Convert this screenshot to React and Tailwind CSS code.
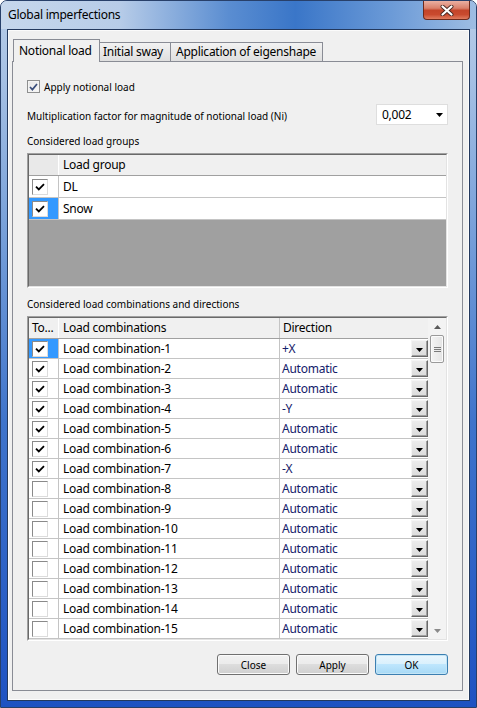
import React from 'react';

const GROUPS = [
  { name: 'DL', on: true, sel: false },
  { name: 'Snow', on: true, sel: true },
];

const DIRS = ['+X', 'Automatic', 'Automatic', '-Y', 'Automatic', 'Automatic', '-X'];
const COMBOS = Array.from({ length: 15 }, (_, i) => ({
  name: `Load combination-${i + 1}`,
  dir: DIRS[i] || 'Automatic',
  on: i < 7,
  sel: i === 0,
}));

function GridCheck({ checked }) {
  return (
    <div className="w-[16px] h-[16px] shrink-0 bg-white border border-t-[#8a8a8a] border-l-[#8a8a8a] border-r-[#dcdcdc] border-b-[#dcdcdc] flex items-center justify-center">
      {checked && (
        <svg width="10" height="8" viewBox="0 0 10 8">
          <path d="M1 3.6 L3.8 6.4 L9 1.2" fill="none" stroke="#000" strokeWidth="1.8" />
        </svg>
      )}
    </div>
  );
}

function DropBtn() {
  return (
    <div className="w-[17px] h-[17px] shrink-0 border border-t-[#f4f4f4] border-l-[#f4f4f4] border-r-[#696969] border-b-[#696969] bg-[linear-gradient(180deg,#ececec,#dcdcdc)] shadow-[inset_-1px_-1px_0_#a0a0a0] flex items-center justify-center">
      <svg width="7" height="4" viewBox="0 0 7 4" className="mt-[2px]">
        <path d="M0 0 H7 L3.5 4 Z" fill="#000" />
      </svg>
    </div>
  );
}

function Button({ children, primary }) {
  return (
    <button
      className={`w-[73px] h-[21px] rounded-[3px] border text-[10px] tracking-normal leading-[16px] text-black ${
        primary
          ? 'border-[#3c7fb1] bg-[linear-gradient(180deg,#eaf6fd_0%,#d9f0fc_50%,#bee6fd_50%,#a7d9f5_100%)] shadow-[inset_0_0_0_1px_#c4e5f6]'
          : 'border-[#707070] bg-[linear-gradient(180deg,#f2f2f2_0%,#ebebeb_50%,#dddddd_50%,#cfcfcf_100%)] shadow-[inset_0_0_0_1px_#fbfbfb]'
      }`}
    >
      {children}
    </button>
  );
}

export default function App() {
  return (
    <div className="w-[477px] h-[708px] flex flex-col overflow-hidden rounded-t-[7px] border border-[#28406a] bg-[linear-gradient(180deg,#b8cde8_0px,#a5c0e4_80px,#7aa2da_220px,#3f74cb_420px,#1e52c2_708px)] font-['Noto_Sans','Open_Sans',sans-serif] text-[12px] leading-[16px] text-black tracking-[-0.25px]">
      {/* title bar */}
      <div className="h-[28px] shrink-0 flex items-start bg-[linear-gradient(90deg,#c6d7ec_0%,#b7cce8_25%,#5a8dd1_48%,#3a76c8_62%,#6b9ad7_82%,#9ebde3_100%)]">
        <span className="ml-[7px] mt-[6px]">Global imperfections</span>
        <div className="ml-auto mr-[6px] w-[47px] h-[19px] rounded-b-[4px] border border-t-0 border-[#6d2a1c] bg-[linear-gradient(180deg,#eab0a2_0%,#d9806b_40%,#c4452a_52%,#c94a2e_75%,#e07c5f_100%)] flex items-center justify-center">
          <svg width="14" height="11" viewBox="0 0 14 11">
            <path d="M2.5 1.5 L11.5 9.5 M11.5 1.5 L2.5 9.5" stroke="#4a2a24" strokeWidth="4" strokeLinecap="round" />
            <path d="M2.5 1.5 L11.5 9.5 M11.5 1.5 L2.5 9.5" stroke="#ffffff" strokeWidth="2.2" strokeLinecap="round" />
          </svg>
        </div>
      </div>

      {/* client area */}
      <div className="flex-1 mx-[6px] mb-[6px] border border-[#23395e] bg-[#f0f0f0] shadow-[inset_0_0_0_1px_#fbfbfb] flex flex-col">
        {/* tabs */}
        <div className="h-[31px] shrink-0 flex items-end pl-[5px]">
          <div className="relative z-10 -mb-px w-[87px] h-[23px] border border-b-0 border-[#898c95] bg-[#f0f0f0] pl-[5px] pt-[3px]">
            Notional load
          </div>
          <div className="w-[71px] h-[19px] border-t border-r border-[#898c95] bg-[linear-gradient(180deg,#f2f2f2,#dfdfdf)] pl-[3px] pt-[1px]">
            Initial sway
          </div>
          <div className="w-[152px] h-[19px] border-t border-r border-[#898c95] bg-[linear-gradient(180deg,#f2f2f2,#dfdfdf)] pl-[5px] pt-[1px]">
            Application of eigenshape
          </div>
        </div>

        {/* tab page */}
        <div className="flex-1 ml-[4px] mr-[6px] mb-[9px] border border-[#898c95] bg-[#f0f0f0] px-[14px] flex flex-col">
          <div className="mt-[16px] h-[17px] flex items-center gap-[4px]">
            <div className="w-[13px] h-[13px] border border-[#8e8f8f] bg-[linear-gradient(135deg,#e6e6e6,#f8f8f8)] shadow-[inset_0_0_0_1px_#f4f4f4] flex items-center justify-center">
              <svg width="9" height="8" viewBox="0 0 9 8">
                <path d="M1 4 L3.4 6.6 L8 1" fill="none" stroke="#3b4f7c" strokeWidth="1.7" />
              </svg>
            </div>
            <span className="text-[10px] tracking-normal">Apply notional load</span>
          </div>

          <div className="mt-[9px] h-[21px] flex items-center justify-between">
            <span className="pt-[3px] text-[10px] tracking-normal">Multiplication factor for magnitude of notional load (Ni)</span>
            <div className="w-[72px] h-[21px] bg-white border border-[#dedede] flex items-center justify-between pl-[5px] pr-[4px]">
              <span>0,002</span>
              <svg width="7" height="4" viewBox="0 0 7 4">
                <path d="M0 0 H7 L3.5 4 Z" fill="#000" />
              </svg>
            </div>
          </div>

          <div className="mt-[8px] h-[16px] text-[10px] tracking-normal">Considered load groups</div>

          {/* load groups grid */}
          <div className="mt-[4px] h-[135px] border border-t-[#a0a0a0] border-l-[#a0a0a0] border-r-[#ffffff] border-b-[#ffffff]">
            <div className="h-full border border-t-[#696969] border-l-[#696969] border-r-[#e3e3e3] border-b-[#e3e3e3] flex flex-col">
              <div className="h-[21px] shrink-0 flex border-b border-[#a0a0a0] bg-[#f0f0f0]">
                <div className="w-[30px] border-r border-[#ffffff] bg-[#e9e9e9]" />
                <div className="flex-1 pl-[4px] pt-[2px]">Load group</div>
              </div>
              {GROUPS.map((g) => (
                <div key={g.name} className="h-[22px] shrink-0 flex border-b border-[#c4c4c4] bg-white">
                  <div className={`w-[30px] border-r border-[#c4c4c4] flex items-center pl-[3px] ${g.sel ? 'bg-[#3399ff]' : ''}`}>
                    <GridCheck checked={g.on} />
                  </div>
                  <div className="flex-1 pl-[4px] flex items-center">{g.name}</div>
                </div>
              ))}
              <div className="flex-1 bg-[#a0a0a0]" />
            </div>
          </div>

          <div className="mt-[8px] h-[16px] text-[10px] tracking-normal">Considered load combinations and directions</div>

          {/* load combinations grid */}
          <div className="mt-[4px] h-[325px] border border-t-[#a0a0a0] border-l-[#a0a0a0] border-r-[#ffffff] border-b-[#ffffff]">
            <div className="h-full border border-t-[#696969] border-l-[#696969] border-r-[#e3e3e3] border-b-[#e3e3e3] flex">
              <div className="flex-1 flex flex-col">
                <div className="h-[21px] shrink-0 flex border-b border-[#a0a0a0] bg-[#f0f0f0]">
                  <div className="w-[30px] border-r border-[#ffffff] pl-[3px] pt-[2px]">To...</div>
                  <div className="w-[221px] border-r border-[#c4c4c4] pl-[4px] pt-[2px]">Load combinations</div>
                  <div className="flex-1 pl-[3px] pt-[2px]">Direction</div>
                </div>
                {COMBOS.map((c) => (
                  <div key={c.name} className="h-[20px] shrink-0 flex border-b border-[#c4c4c4] bg-white">
                    <div className={`w-[30px] border-r border-[#c4c4c4] flex items-center pl-[3px] ${c.sel ? 'bg-[#3399ff]' : ''}`}>
                      <GridCheck checked={c.on} />
                    </div>
                    <div className="w-[221px] border-r border-[#c4c4c4] pl-[4px] flex items-center">{c.name}</div>
                    <div className="flex-1 pl-[2px] flex items-center justify-between text-[#14206a]">
                      <span>{c.dir}</span>
                      <DropBtn />
                    </div>
                  </div>
                ))}
              </div>

              {/* scrollbar */}
              <div className="w-[18px] shrink-0 bg-[#f3f3f3] flex flex-col items-center">
                <div className="h-[17px] w-full flex items-center justify-center">
                  <svg width="7" height="4" viewBox="0 0 7 4">
                    <path d="M3.5 0 L7 4 H0 Z" fill="#5a5a5a" />
                  </svg>
                </div>
                <div className="w-[14px] h-[28px] rounded-[2px] border border-[#9a9a9a] bg-[linear-gradient(90deg,#f4f4f4,#e4e4e4)] shadow-[inset_0_0_0_1px_#fbfbfb] flex flex-col items-center justify-center gap-[1px]">
                  <div className="w-[7px] h-px bg-[#7a7a7a]" />
                  <div className="w-[7px] h-px bg-[#7a7a7a]" />
                  <div className="w-[7px] h-px bg-[#7a7a7a]" />
                </div>
                <div className="flex-1" />
                <div className="h-[17px] w-full flex items-center justify-center">
                  <svg width="7" height="4" viewBox="0 0 7 4">
                    <path d="M0 0 H7 L3.5 4 Z" fill="#8a8a8a" />
                  </svg>
                </div>
              </div>
            </div>
          </div>

          <div className="mt-[13px] flex justify-end gap-[6px]">
            <Button>Close</Button>
            <Button>Apply</Button>
            <Button primary>OK</Button>
          </div>
        </div>
      </div>
    </div>
  );
}
